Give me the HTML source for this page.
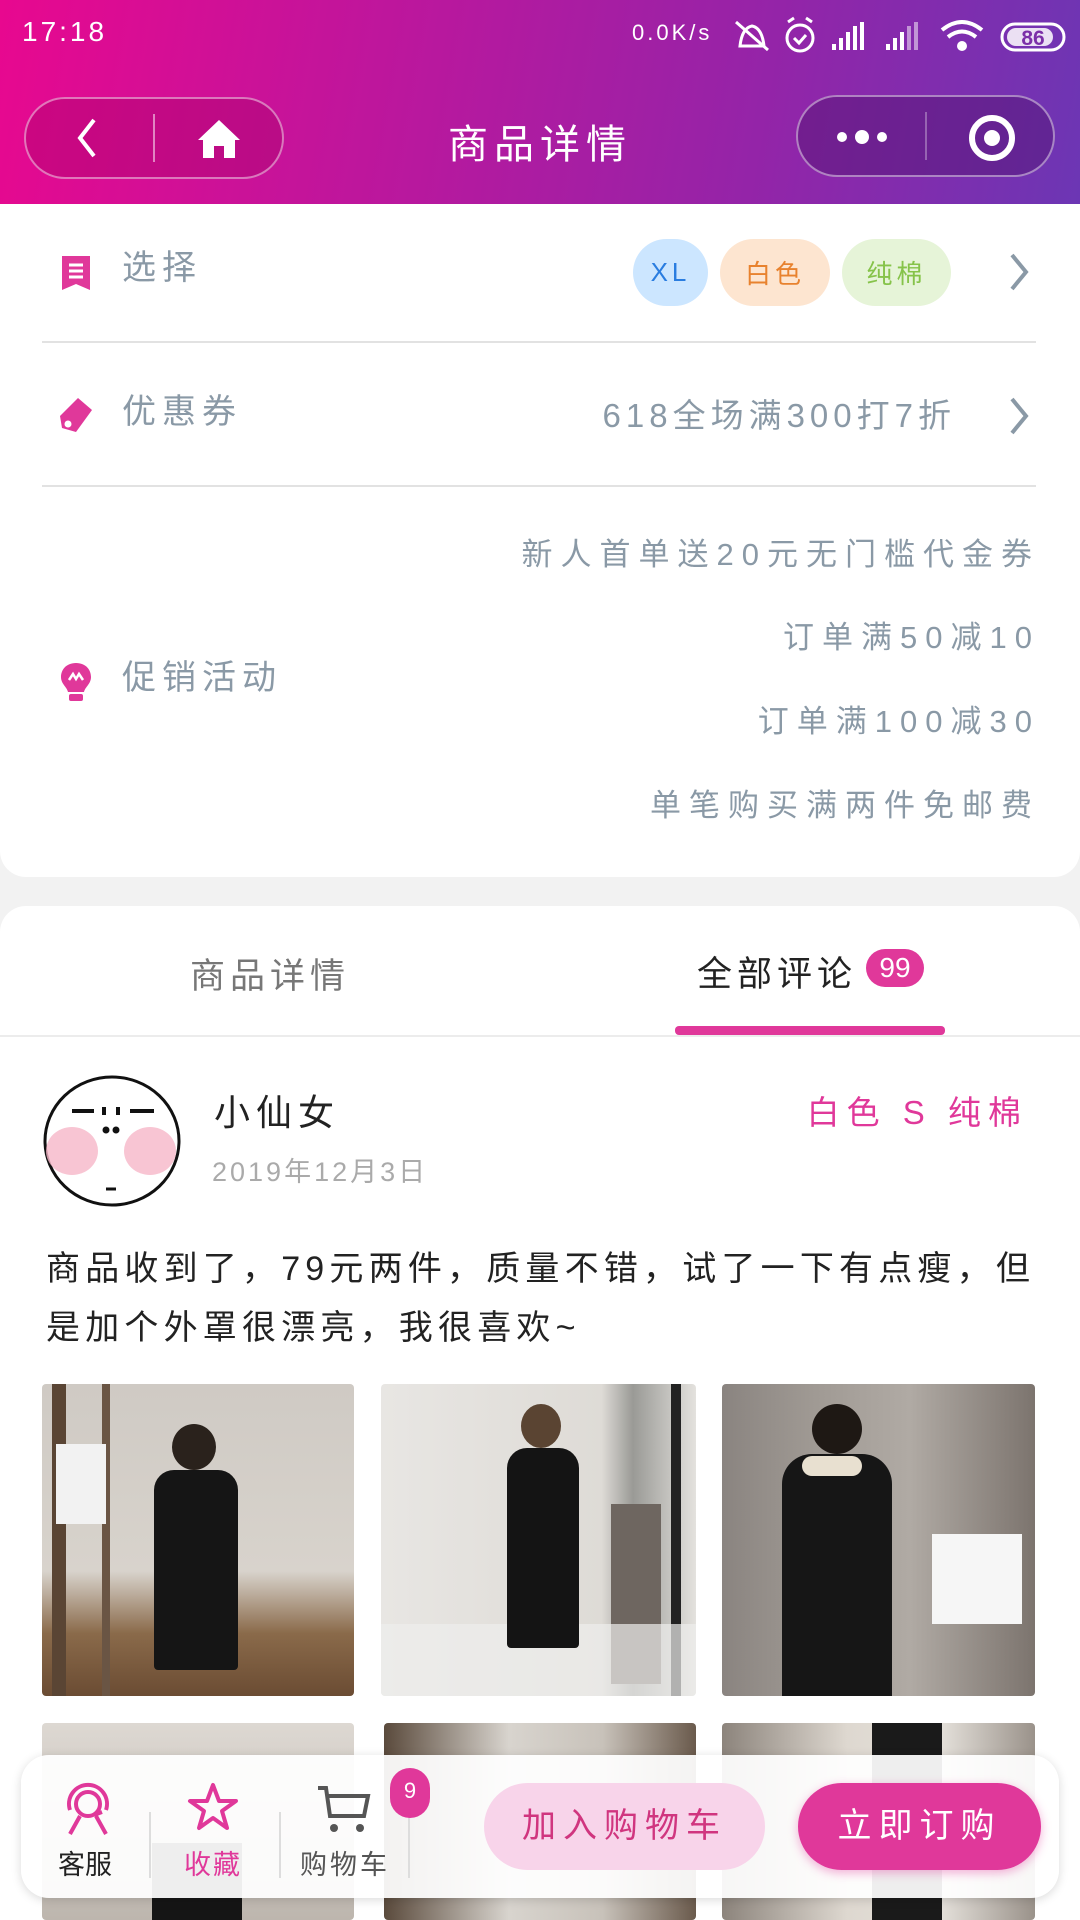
<!DOCTYPE html>
<html><head><meta charset="utf-8">
<style>
*{margin:0;padding:0;box-sizing:border-box}
body{width:1080px;height:1920px;overflow:hidden;background:#f2f2f2;font-family:"Liberation Sans","Noto Sans CJK SC",sans-serif;position:relative}
.abs{position:absolute}
.hdr{left:0;top:0;width:1080px;height:204px;background:linear-gradient(100deg,#e8088f 0%,#b8189e 40%,#9424a8 70%,#6c36b4 100%)}
.cap{height:82px;border:2px solid rgba(255,255,255,.45);border-radius:41px}
.card1{left:0;top:204px;width:1080px;height:673px;background:#fff;border-radius:0 0 26px 26px}
.lbl{font-size:34px;color:#8a99a6;letter-spacing:6px;line-height:40px}
.gray{color:#8a99a6;font-size:31px;letter-spacing:8px;line-height:40px;white-space:nowrap}
.div{height:2px;background:#e2e2e2;left:42px;width:994px}
.pill{height:67px;border-radius:34px;font-size:26px;display:flex;align-items:center;justify-content:center;letter-spacing:4px}
.card2{left:0;top:906px;width:1080px;height:1014px;background:#fff;border-radius:26px 26px 0 0}
.img{border-radius:4px;overflow:hidden}
</style></head><body>
<div class="abs hdr"></div>
<div class="abs" style="left:22px;top:16px;color:#fff;font-size:28px;letter-spacing:3px">17:18</div>
<div class="abs" style="left:632px;top:20px;color:#fff;font-size:22px;letter-spacing:3px">0.0K/s</div>
<svg class="abs" style="left:730px;top:14px" width="340" height="44" viewBox="0 0 340 44">
 <g fill="none" stroke="#fff" stroke-width="3">
  <path d="M10 32 Q12 14 22 12 Q32 14 34 32 Z"/><path d="M6 8 L38 36"/>
  <circle cx="70" cy="24" r="13"/><path d="M64 24 l5 5 l7-8"/><path d="M58 8 l6 -4 M82 8 l-6 -4"/>
 </g>
 <g fill="#fff"><rect x="102" y="30" width="4" height="6"/><rect x="109" y="24" width="4" height="12"/><rect x="116" y="18" width="4" height="18"/><rect x="123" y="12" width="4" height="24"/><rect x="130" y="8" width="4" height="28"/>
 <rect x="156" y="30" width="4" height="6"/><rect x="163" y="24" width="4" height="12"/><rect x="170" y="18" width="4" height="18"/><rect x="177" y="12" width="4" height="24" opacity=".5"/><rect x="184" y="8" width="4" height="28" opacity=".5"/></g>
 <g fill="none" stroke="#fff" stroke-width="4"><path d="M212 16 Q232 0 252 16"/><path d="M218 23 Q232 12 246 23"/></g><circle cx="232" cy="32" r="5" fill="#fff"/>
 <rect x="272" y="10" width="62" height="26" rx="13" fill="none" stroke="#fff" stroke-width="3"/><rect x="277" y="14" width="46" height="18" rx="9" fill="#fff" opacity=".85"/>
 <text x="303" y="31" font-size="21" font-weight="bold" text-anchor="middle" fill="#7b2fa8" font-family="Liberation Sans">86</text>
</svg>
<div class="abs cap" style="left:24px;top:97px;width:260px;background:rgba(160,0,100,.35)"></div>
<div class="abs" style="left:153px;top:114px;width:2px;height:48px;background:rgba(255,255,255,.5)"></div>
<svg class="abs" style="left:72px;top:116px" width="30" height="44"><path d="M22 4 L8 22 L22 40" fill="none" stroke="#fff" stroke-width="4"/></svg>
<svg class="abs" style="left:196px;top:118px" width="46" height="42"><path d="M23 2 L44 22 L39 22 L39 40 L28 40 L28 28 L18 28 L18 40 L7 40 L7 22 L2 22 Z" fill="#fff"/></svg>
<div class="abs" style="left:0;top:112px;width:1080px;text-align:center;color:#fff;font-size:40px;letter-spacing:6px">商品详情</div>
<div class="abs cap" style="left:796px;top:95px;width:259px;background:rgba(80,20,110,.45)"></div>
<div class="abs" style="left:925px;top:112px;width:2px;height:48px;background:rgba(255,255,255,.3)"></div>
<svg class="abs" style="left:834px;top:124px" width="56" height="26"><circle cx="8" cy="13" r="5" fill="#fff"/><circle cx="28" cy="13" r="7" fill="#fff"/><circle cx="48" cy="13" r="5" fill="#fff"/></svg>
<svg class="abs" style="left:966px;top:112px" width="52" height="52"><circle cx="26" cy="26" r="20" fill="none" stroke="#fff" stroke-width="6"/><circle cx="26" cy="26" r="8" fill="#fff"/></svg>

<div class="abs card1"></div>
<svg class="abs" style="left:60px;top:254px" width="32" height="38"><path d="M2 2 H30 V36 L16 30 L2 36 Z" fill="#e0389a"/><path d="M9 11h14M9 17h14M9 23h14" stroke="#fff" stroke-width="3"/></svg>
<div class="abs lbl" style="left:122px;top:248px">选择</div>
<div class="abs pill" style="left:633px;top:239px;width:75px;background:#cce6ff;color:#2a7de0">XL</div>
<div class="abs pill" style="left:720px;top:239px;width:110px;background:#fde5d0;color:#e8822e">白色</div>
<div class="abs pill" style="left:842px;top:239px;width:109px;background:#e6f4d8;color:#86c34a">纯棉</div>
<svg class="abs" style="left:1008px;top:252px" width="24" height="40"><path d="M4 3 L18 20 L4 37" fill="none" stroke="#8a99a6" stroke-width="4"/></svg>
<div class="abs div" style="top:341px"></div>
<svg class="abs" style="left:58px;top:396px" width="36" height="38"><path d="M20 2 L34 14 L18 36 L4 32 L2 20 Z" fill="#e0389a"/><circle cx="10" cy="28" r="3.5" fill="#fff"/></svg>
<div class="abs lbl" style="left:122px;top:392px">优惠券</div>
<div class="abs gray" style="right:124px;top:396px;font-size:33px;letter-spacing:5px">618全场满300打7折</div>
<svg class="abs" style="left:1008px;top:396px" width="24" height="40"><path d="M4 3 L18 20 L4 37" fill="none" stroke="#8a99a6" stroke-width="4"/></svg>
<div class="abs div" style="top:485px"></div>
<svg class="abs" style="left:58px;top:660px" width="36" height="44"><path d="M18 3 C8 3 3 10 3 17 C3 24 9 27 10 32 H26 C27 27 33 24 33 17 C33 10 28 3 18 3Z" fill="#e0389a"/><rect x="11" y="34" width="14" height="7" rx="2" fill="#e0389a"/><path d="M11 20 l4-6 l3 5 l3-5 l4 6" fill="none" stroke="#fff" stroke-width="2.5"/></svg>
<div class="abs lbl" style="left:122px;top:658px">促销活动</div>
<div class="abs gray" style="right:40px;top:535px">新人首单送20元无门槛代金券</div>
<div class="abs gray" style="right:40px;top:618px">订单满50减10</div>
<div class="abs gray" style="right:40px;top:702px">订单满100减30</div>
<div class="abs gray" style="right:40px;top:786px">单笔购买满两件免邮费</div>

<div class="abs card2"></div>
<div class="abs" style="left:190px;top:948px;font-size:35px;color:#777;letter-spacing:5px">商品详情</div>
<div class="abs" style="left:697px;top:946px;font-size:35px;color:#222;letter-spacing:5px">全部评论</div>
<div class="abs" style="left:866px;top:949px;width:58px;height:38px;border-radius:19px;background:#e0389a;color:#fff;font-size:28px;text-align:center;line-height:38px">99</div>
<div class="abs" style="left:675px;top:1026px;width:270px;height:9px;background:#e0389a;border-radius:4px"></div>
<div class="abs" style="left:0;top:1035px;width:1080px;height:2px;background:#ececec"></div>

<svg class="abs" style="left:42px;top:1073px" width="140" height="136">
 <ellipse cx="70" cy="68" rx="67" ry="64" fill="#fff" stroke="#111" stroke-width="3"/>
 <ellipse cx="30" cy="78" rx="26" ry="24" fill="#f6b6c8" opacity=".8"/><ellipse cx="108" cy="78" rx="26" ry="24" fill="#f6b6c8" opacity=".8"/>
 <path d="M30 38 h22 M88 38 h24 M62 34 v8 M76 34 v8" stroke="#111" stroke-width="4"/>
 <circle cx="64" cy="57" r="3.5" fill="#111"/><circle cx="74" cy="57" r="3.5" fill="#111"/>
 <path d="M64 116 h10" stroke="#111" stroke-width="3"/>
</svg>
<div class="abs" style="left:214px;top:1084px;font-size:36px;color:#222;letter-spacing:6px">小仙女</div>
<div class="abs" style="left:212px;top:1150px;font-size:27px;color:#aaa;letter-spacing:3px">2019年12月3日</div>
<div class="abs" style="right:52px;top:1086px;font-size:33px;color:#e0389a;letter-spacing:7px">白色 S 纯棉</div>
<div class="abs" style="left:46px;top:1240px;font-size:34px;color:#222;letter-spacing:5.2px;line-height:59px;white-space:nowrap">商品收到了，79元两件，质量不错，试了一下有点瘦，但<br>是加个外罩很漂亮，我很喜欢~</div>

<!-- images -->
<div class="abs img" style="left:42px;top:1384px;width:312px;height:312px;background:linear-gradient(180deg,#cfcac4 0%,#d8d3cc 60%,#8a6a4a 80%,#6b4c33 100%)">
 <div class="abs" style="left:10px;top:0;width:14px;height:312px;background:#5a4534"></div>
 <div class="abs" style="left:60px;top:0;width:8px;height:312px;background:#6a5544"></div>
 <div class="abs" style="left:14px;top:60px;width:50px;height:80px;background:#f2f2f2"></div>
 <div class="abs" style="left:130px;top:40px;width:44px;height:46px;border-radius:50%;background:#2a221c"></div>
 <div class="abs" style="left:112px;top:86px;width:84px;height:200px;background:#151515;border-radius:20px 20px 4px 4px"></div>
</div>
<div class="abs img" style="left:381px;top:1384px;width:315px;height:312px;background:linear-gradient(90deg,#e8e6e3 0%,#dedbd6 70%,#9a9a96 80%,#e4e2de 100%)">
 <div class="abs" style="left:290px;top:0;width:10px;height:312px;background:#222"></div>
 <div class="abs" style="left:230px;top:120px;width:50px;height:180px;background:#6e6660"></div>
 <div class="abs" style="left:0;top:240px;width:315px;height:72px;background:#eeeeec;opacity:.7"></div>
 <div class="abs" style="left:140px;top:20px;width:40px;height:44px;border-radius:50%;background:#5a4432"></div>
 <div class="abs" style="left:126px;top:64px;width:72px;height:200px;background:#141414;border-radius:20px 20px 4px 4px"></div>
</div>
<div class="abs img" style="left:722px;top:1384px;width:313px;height:312px;background:linear-gradient(90deg,#8a8480 0%,#a09a94 30%,#b0aaa4 60%,#7c746e 100%)">
 <div class="abs" style="left:210px;top:150px;width:90px;height:90px;background:#f6f6f6"></div>
 <div class="abs" style="left:90px;top:20px;width:50px;height:50px;border-radius:50%;background:#1e1814"></div>
 <div class="abs" style="left:60px;top:70px;width:110px;height:242px;background:#161616;border-radius:30px 30px 0 0"></div>
 <div class="abs" style="left:80px;top:72px;width:60px;height:20px;background:#e8e0d0;border-radius:10px"></div>
</div>
<div class="abs img" style="left:42px;top:1723px;width:312px;height:197px;background:linear-gradient(180deg,#ddd8d2,#bdb6ae)"><div class="abs" style="left:110px;top:120px;width:90px;height:77px;background:#151515"></div></div>
<div class="abs img" style="left:384px;top:1723px;width:312px;height:197px;background:linear-gradient(90deg,#5a4a3c,#d8d4ce 40%,#c8c2ba 70%,#6a5a4c)"></div>
<div class="abs img" style="left:722px;top:1723px;width:313px;height:197px;background:linear-gradient(90deg,#8c847c,#ded8d0 40%,#e4e0da 70%,#9a928a)"><div class="abs" style="left:150px;top:0;width:70px;height:197px;background:#1a1a1a"></div></div>

<!-- bottom bar -->
<div class="abs" style="left:21px;top:1755px;width:1038px;height:143px;background:rgba(255,255,255,.93);border-radius:28px;box-shadow:0 2px 10px rgba(0,0,0,.15)"></div>
<svg class="abs" style="left:62px;top:1782px" width="52" height="54"><g fill="none" stroke="#e0389a" stroke-width="4"><circle cx="26" cy="22" r="12"/><path d="M8 28 A19 19 0 1 1 44 28"/><path d="M8 52 L18 34 M44 52 L34 34"/><path d="M40 30 l-8 3"/></g></svg>
<div class="abs" style="left:58px;top:1843px;font-size:27px;color:#222">客服</div>
<div class="abs" style="left:149px;top:1812px;width:2px;height:66px;background:#ddd"></div>
<svg class="abs" style="left:186px;top:1781px" width="54" height="54"><path d="M27 4 L33 20 L50 20 L36 30 L41 47 L27 37 L13 47 L18 30 L4 20 L21 20 Z" fill="none" stroke="#e0389a" stroke-width="4" stroke-linejoin="round"/></svg>
<div class="abs" style="left:184px;top:1843px;font-size:27px;color:#e0389a;letter-spacing:2px">收藏</div>
<div class="abs" style="left:279px;top:1812px;width:2px;height:66px;background:#ddd"></div>
<svg class="abs" style="left:316px;top:1784px" width="56" height="54"><g fill="none" stroke="#555" stroke-width="4"><path d="M2 4 H10 L14 32 H48 L52 12 H12"/></g><circle cx="18" cy="44" r="4" fill="#555"/><circle cx="44" cy="44" r="4" fill="#555"/></svg>
<div class="abs" style="left:300px;top:1843px;font-size:27px;color:#555;letter-spacing:3px">购物车</div>
<div class="abs" style="left:408px;top:1812px;width:2px;height:66px;background:#ddd"></div>
<div class="abs" style="left:390px;top:1768px;width:40px;height:50px;border-radius:20px;background:#e0389a;color:#fff;font-size:22px;text-align:center;line-height:46px">9</div>
<div class="abs" style="left:484px;top:1783px;width:281px;height:87px;border-radius:44px;background:#f8d4ea;color:#d0357f;font-size:34px;letter-spacing:7px;text-align:center;line-height:87px">加入购物车</div>
<div class="abs" style="left:798px;top:1783px;width:243px;height:87px;border-radius:44px;background:#e0389a;color:#fff;font-size:34px;letter-spacing:7px;text-align:center;line-height:87px;box-shadow:0 3px 10px rgba(224,56,154,.4)">立即订购</div>
</body></html>
